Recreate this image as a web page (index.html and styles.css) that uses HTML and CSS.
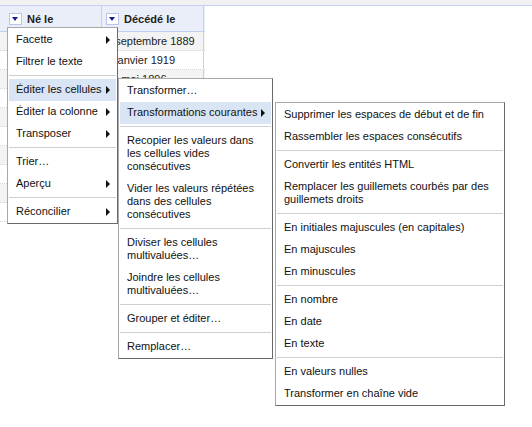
FILE: index.html
```html
<!DOCTYPE html>
<html lang="fr">
<head>
<meta charset="utf-8">
<link rel="stylesheet" href="styles.css">
</head>
<body>
<div class="topbar"></div>
<div class="grid">
  <div class="hrow">
    <div class="hcell"><span class="dd"></span><span class="htext">Né le</span></div>
    <div class="hcell"><span class="dd"></span><span class="htext">Décédé le</span></div>
  </div>
  <div class="row odd"><div class="cell"></div><div class="cell">3 septembre 1889</div></div>
  <div class="row"><div class="cell"></div><div class="cell">8 janvier 1919</div></div>
  <div class="row odd"><div class="cell"></div><div class="cell">14 mai 1896</div></div>
  <div class="row"><div class="cell"></div><div class="cell"></div></div>
  <div class="row odd"><div class="cell"></div><div class="cell"></div></div>
  <div class="row"><div class="cell"></div><div class="cell"></div></div>
  <div class="row odd"><div class="cell"></div><div class="cell"></div></div>
  <div class="row"><div class="cell"></div><div class="cell"></div></div>
  <div class="row odd"><div class="cell"></div><div class="cell"></div></div>
  <div class="row"><div class="cell"></div><div class="cell"></div></div>
</div>

<div class="menu m1">
  <div class="item sub">Facette</div>
  <div class="item">Filtrer le texte</div>
  <div class="sep"></div>
  <div class="item sub active">Éditer les cellules</div>
  <div class="item sub">Éditer la colonne</div>
  <div class="item sub">Transposer</div>
  <div class="sep"></div>
  <div class="item">Trier…</div>
  <div class="item sub">Aperçu</div>
  <div class="sep"></div>
  <div class="item sub">Réconcilier</div>
</div>

<div class="menu m2">
  <div class="item">Transformer…</div>
  <div class="item sub active">Transformations courantes</div>
  <div class="sep"></div>
  <div class="item">Recopier les valeurs dans les cellules vides consécutives</div>
  <div class="item">Vider les valeurs répétées dans des cellules consécutives</div>
  <div class="sep"></div>
  <div class="item">Diviser les cellules multivaluées…</div>
  <div class="item">Joindre les cellules multivaluées…</div>
  <div class="sep"></div>
  <div class="item">Grouper et éditer…</div>
  <div class="sep"></div>
  <div class="item">Remplacer…</div>
</div>

<div class="menu m3">
  <div class="item">Supprimer les espaces de début et de fin</div>
  <div class="item">Rassembler les espaces consécutifs</div>
  <div class="sep"></div>
  <div class="item">Convertir les entités HTML</div>
  <div class="item">Remplacer les guillemets courbés par des guillemets droits</div>
  <div class="sep"></div>
  <div class="item">En initiales majuscules (en capitales)</div>
  <div class="item">En majuscules</div>
  <div class="item">En minuscules</div>
  <div class="sep"></div>
  <div class="item">En nombre</div>
  <div class="item">En date</div>
  <div class="item">En texte</div>
  <div class="sep"></div>
  <div class="item">En valeurs nulles</div>
  <div class="item">Transformer en chaîne vide</div>
</div>
</body>
</html>
```

FILE: styles.css
```css
html, body {
  margin: 0;
  padding: 0;
  background: #fff;
}
body {
  font-family: "Liberation Sans", Arial, sans-serif;
  font-size: 11px;
  color: #111;
  position: relative;
  width: 532px;
  height: 427px;
  overflow: hidden;
}
.topbar {
  height: 5px;
  background: #f1f1f1;
  border-bottom: 1px solid #c5d0f0;
}
.grid {
  width: 205px;
}
.hrow {
  display: flex;
  height: 25px;
  background: #eaeef9;
  border-bottom: 1px solid #c3cff0;
}
.hcell {
  width: 102px;
  border-right: 1px solid #c3cff0;
  display: flex;
  align-items: center;
  padding-left: 9px;
  box-sizing: border-box;
}
.hcell + .hcell {
  width: 102px;
  padding-left: 4px;
}
.dd {
  width: 11px;
  height: 10px;
  background: #fff;
  border: 1px solid #b9c6ea;
  position: relative;
  margin-right: 5px;
  flex: none;
}
.dd::after {
  content: "";
  position: absolute;
  left: 2px;
  top: 3px;
  border-left: 3.5px solid transparent;
  border-right: 3.5px solid transparent;
  border-top: 4px solid #1a1a9a;
}
.htext {
  font-weight: bold;
  color: #222;
}
.row {
  display: flex;
  height: 18px;
  border-bottom: 1px dotted #d8d8d8;
}
.row.odd {
  background: #f3f3f3;
}
.cell {
  width: 102px;
  border-right: 1px solid #e2e2e2;
  padding-left: 4px;
  box-sizing: border-box;
  line-height: 18px;
  white-space: nowrap;
  overflow: hidden;
  color: #222;
}
.cell + .cell {
  width: 102px;
  border-right-color: #c3cff0;
}

.menu {
  position: absolute;
  background: #fff;
  border: 1px solid #a8a8a8;
  border-right-color: #6a6a6a;
  border-bottom-color: #6a6a6a;
  padding: 1px 1px 0;
  box-sizing: border-box;
}
.m1 { left: 7px; top: 27px; width: 111px; }
.m2 { left: 118px; top: 78px; width: 155px; }
.m3 { left: 275px; top: 102px; width: 230px; }

.item {
  position: relative;
  padding: 4px 12px 5px 7px;
  line-height: 13px;
  color: #111;
}
.item.sub {
  white-space: nowrap;
}
.item.active {
  background: #d9e4f5;
}
.item.sub::after {
  content: "";
  position: absolute;
  right: 6px;
  top: 7px;
  border-top: 4px solid transparent;
  border-bottom: 4px solid transparent;
  border-left: 4px solid #111;
}
.sep {
  border-top: 1px solid #cfcfcf;
  margin: 2px 0 3px;
}
```
